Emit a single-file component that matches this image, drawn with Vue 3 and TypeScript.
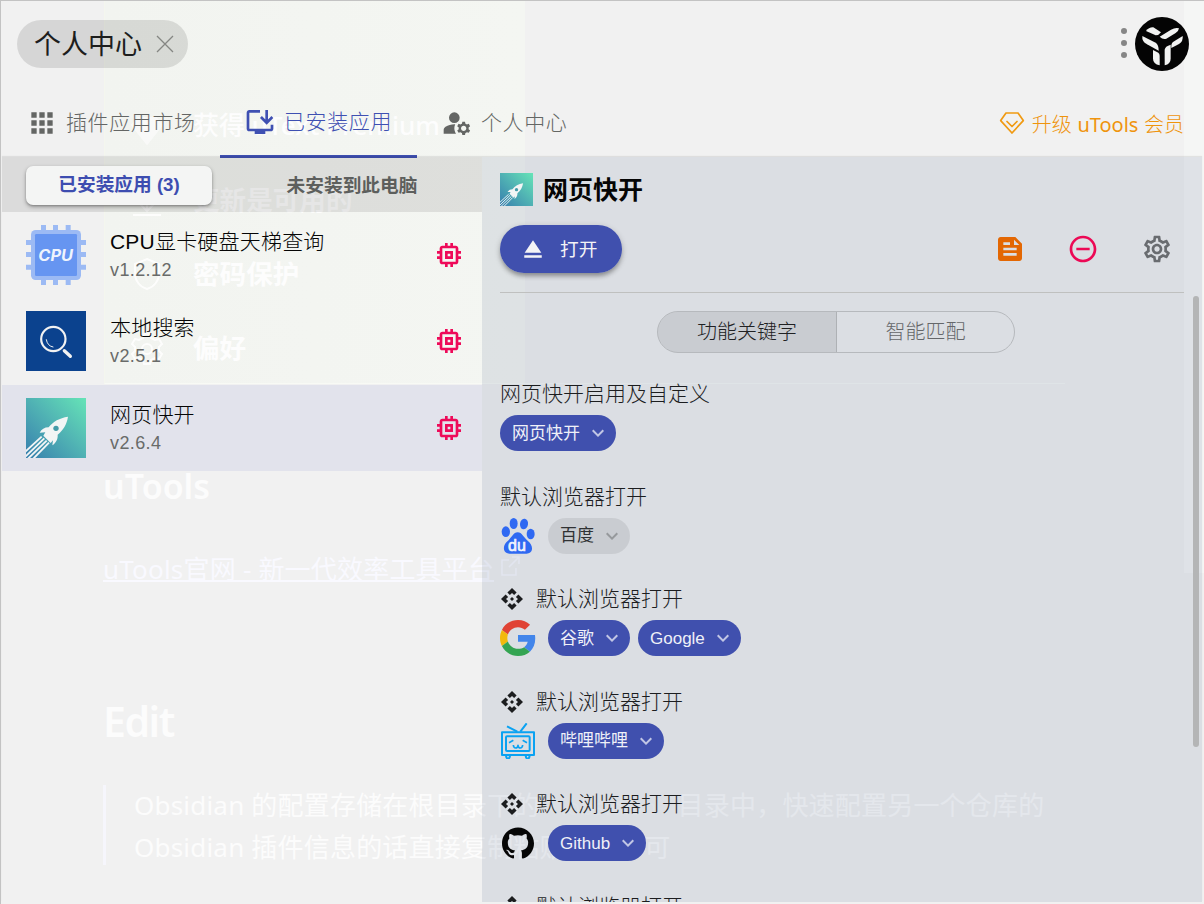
<script setup lang="ts">
interface PluginApp { id: string; name: string; version: string; active: boolean }
interface Keyword { label: string; enabled: boolean }
interface Feature { title: string; logo: string; api: boolean; keywords: Keyword[] }

const apps: PluginApp[] = [
  { id: 'cpu', name: 'CPU显卡硬盘天梯查询', version: 'v1.2.12', active: false },
  { id: 'search', name: '本地搜索', version: 'v2.5.1', active: false },
  { id: 'rocket', name: '网页快开', version: 'v2.6.4', active: true },
]

const features: Feature[] = [
  { title: '网页快开启用及自定义', logo: '', api: false, keywords: [{ label: '网页快开', enabled: true }] },
  { title: '默认浏览器打开', logo: 'baidu', api: false, keywords: [{ label: '百度', enabled: false }] },
  { title: '默认浏览器打开', logo: 'google', api: true, keywords: [{ label: '谷歌', enabled: true }, { label: 'Google', enabled: true }] },
  { title: '默认浏览器打开', logo: 'bilibili', api: true, keywords: [{ label: '哔哩哔哩', enabled: true }] },
  { title: '默认浏览器打开', logo: 'github', api: true, keywords: [{ label: 'Github', enabled: true }] },
  { title: '默认浏览器打开', logo: '', api: true, keywords: [] },
]

const icons = {
  apps: 'M4 8h4V4H4v4zm6 12h4v-4h-4v4zm-6 0h4v-4H4v4zm0-6h4v-4H4v4zm6 0h4v-4h-4v4zm6-10v4h4V4h-4zm-6 4h4V4h-4v4zm6 6h4v-4h-4v4zm0 6h4v-4h-4v4z',
  install: 'M20 17H4V5h8V3H4c-1.1 0-2 .9-2 2v12c0 1.1.9 2 2 2h4v2h8v-2h4c1.1 0 2-.9 2-2v-3h-2v3zM17 14l5-5-1.41-1.41L18 10.17V3h-2v7.17l-2.59-2.58L12 9l5 5z',
  account: 'M10 4a4 4 0 1 0 0 8 4 4 0 0 0 0-8zM10.67 13.02C10.45 13.01 10.23 13 10 13c-2.42 0-4.68.67-6.61 1.82-.88.52-1.39 1.5-1.39 2.53V20h9.26c-.79-1.13-1.26-2.51-1.26-4 0-1.07.25-2.07.67-2.98zM20.75 16c0-.22-.03-.42-.06-.63l1.14-1.01-1-1.73-1.45.49c-.32-.27-.68-.48-1.08-.63L18 11h-2l-.3 1.49c-.4.15-.76.36-1.08.63l-1.45-.49-1 1.73 1.14 1.01c-.03.21-.06.41-.06.63s.03.42.06.63l-1.14 1.01 1 1.73 1.45-.49c.32.27.68.48 1.08.63L16 21h2l.3-1.49c.4-.15.76-.36 1.08-.63l1.45.49 1-1.73-1.14-1.01c.03-.21.06-.41.06-.63zM17 18c-1.1 0-2-.9-2-2s.9-2 2-2 2 .9 2 2-.9 2-2 2z',
  memory: 'M15 9H9v6h6V9zm-2 4h-2v-2h2v2zm8-2V9h-2V7c0-1.1-.9-2-2-2h-2V3h-2v2h-2V3H9v2H7c-1.1 0-2 .9-2 2v2H3v2h2v2H3v2h2v2c0 1.1.9 2 2 2h2v2h2v-2h2v2h2v-2h2c1.1 0 2-.9 2-2v-2h2v-2h-2v-2h2zm-4 6H7V7h10v10z',
  eject: 'M5 17h14v2H5zm7-12L5.33 15h13.34z',
  feed: 'M16 3H5c-1.1 0-2 .9-2 2v14c0 1.1.9 2 2 2h14c1.1 0 2-.9 2-2V8l-5-5zM7 7h5v2H7V7zm10 10H7v-2h10v2zm0-4H7v-2h10v2zm-2-4V5l4 4h-4z',
  remove: 'M7 11v2h10v-2H7zm5-9C6.48 2 2 6.48 2 12s4.48 10 10 10 10-4.48 10-10S17.52 2 12 2zm0 18c-4.41 0-8-3.59-8-8s3.59-8 8-8 8 3.59 8 8-3.59 8-8 8z',
  settings: 'M19.43 12.98c.04-.32.07-.64.07-.98 0-.34-.03-.66-.07-.98l2.11-1.65c.19-.15.24-.42.12-.64l-2-3.46c-.09-.16-.26-.25-.44-.25-.06 0-.12.01-.17.03l-2.49 1c-.52-.4-1.08-.73-1.69-.98l-.38-2.65C14.46 2.18 14.25 2 14 2h-4c-.25 0-.46.18-.49.42l-.38 2.65c-.61.25-1.17.59-1.69.98l-2.49-1c-.06-.02-.12-.03-.18-.03-.17 0-.34.09-.43.25l-2 3.46c-.13.22-.07.49.12.64l2.11 1.65c-.04.32-.07.65-.07.98 0 .33.03.66.07.98l-2.11 1.65c-.19.15-.24.42-.12.64l2 3.46c.09.16.26.25.44.25.06 0 .12-.01.17-.03l2.49-1c.52.4 1.08.73 1.69.98l.38 2.65c.03.24.24.42.49.42h4c.25 0 .46-.18.49-.42l.38-2.65c.61-.25 1.17-.59 1.69-.98l2.49 1c.06.02.12.03.18.03.17 0 .34-.09.43-.25l2-3.46c.12-.22.07-.49-.12-.64l-2.11-1.65zm-1.98-1.71c.04.31.05.52.05.73 0 .21-.02.43-.05.73l-.14 1.13.89.7 1.08.84-.7 1.21-1.27-.51-1.04-.42-.9.68c-.43.32-.84.56-1.25.73l-1.06.43-.16 1.13-.2 1.35h-1.4l-.19-1.35-.16-1.13-1.06-.43c-.43-.18-.83-.41-1.23-.71l-.91-.7-1.06.43-1.27.51-.7-1.21 1.08-.84.89-.7-.14-1.13c-.03-.31-.05-.54-.05-.74s.02-.43.05-.73l.14-1.13-.89-.7-1.08-.84.7-1.21 1.27.51 1.04.42.9-.68c.43-.32.84-.56 1.25-.73l1.06-.43.16-1.13.2-1.35h1.39l.19 1.35.16 1.13 1.06.43c.43.18.83.41 1.23.71l.91.7 1.06-.43 1.27-.51.7 1.21-1.07.85-.89.7.14 1.13zM12 8c-2.21 0-4 1.79-4 4s1.79 4 4 4 4-1.79 4-4-1.79-4-4-4zm0 6c-1.1 0-2-.9-2-2s.9-2 2-2 2 .9 2 2-.9 2-2 2z',
  api: 'M14 12l-2 2-2-2 2-2 2 2zm-2-6l2.12 2.12 2.5-2.5L12 1 7.38 5.62l2.5 2.5L12 6zm-6 6l2.12-2.12-2.5-2.5L1 12l4.62 4.62 2.5-2.5L6 12zm12 0l-2.12 2.12 2.5 2.5L23 12l-4.62-4.62-2.5 2.5L18 12zm-6 6l-2.12-2.12-2.5 2.5L12 23l4.62-4.62-2.5-2.5L12 18z',
  chevron: 'M16.59 8.59L12 13.17 7.41 8.59 6 10l6 6 6-6z',
  github: 'M12 .297c-6.63 0-12 5.373-12 12 0 5.303 3.438 9.8 8.205 11.385.6.113.82-.258.82-.577 0-.285-.01-1.04-.015-2.04-3.338.724-4.042-1.61-4.042-1.61C4.422 18.07 3.633 17.7 3.633 17.7c-1.087-.744.084-.729.084-.729 1.205.084 1.838 1.236 1.838 1.236 1.07 1.835 2.809 1.305 3.495.998.108-.776.417-1.305.76-1.605-2.665-.3-5.466-1.332-5.466-5.93 0-1.31.465-2.38 1.235-3.22-.135-.303-.54-1.523.105-3.176 0 0 1.005-.322 3.3 1.23.96-.267 1.98-.399 3-.405 1.02.006 2.04.138 3 .405 2.28-1.552 3.285-1.23 3.285-1.23.645 1.653.24 2.873.12 3.176.765.84 1.23 1.91 1.23 3.22 0 4.61-2.805 5.625-5.475 5.92.42.36.81 1.096.81 2.22 0 1.606-.015 2.896-.015 3.286 0 .315.21.69.825.57C20.565 22.092 24 17.592 24 12.297c0-6.627-5.373-12-12-12',
}
const rocketBody = 'M126 56C100 60 82 70 68 88C55 88 47 94 41 104L58 103L52 113L74 135L81 127L79 142C90 134 96 124 95 110C112 96 122 80 126 56Z'
</script>

<template>
  <div class="window">
    <!-- content of the window behind, seen through the translucent surface -->
    <div class="behind">
      <div class="tint"></div>
      <div class="tint-right"></div>
      <div class="edge"></div>
      <svg class="behind-icons" viewBox="0 0 40 280" width="40" height="280" fill="none" stroke="#fff" stroke-width="2">
        <path d="M11 11h18l6 7-15 19L5 18z" fill="#fff" opacity=".7" />
        <path d="M20 82v22m-9-9 9 9 9-9M6 108h28" />
        <path d="M20 152l12 5v9c0 8-5 14-12 16-7-2-12-8-12-16v-9z" />
        <path d="M17 227h6l1 4 4 2 4-1 3 5-3 3v4l3 3-3 5-4-1-4 2-1 4h-6l-1-4-4-2-4 1-3-5 3-3v-4l-3-3 3-5 4 1 4-2z" />
        <circle cx="20" cy="242" r="5" />
      </svg>
      <p class="b-menu m1">获得 uText Premium</p>
      <p class="b-menu m2">更新是可用的</p>
      <p class="b-menu m3">密码保护</p>
      <p class="b-menu m4">偏好</p>
      <p class="b-h2">uTools</p>
      <p class="b-link"><span>uTools官网 - 新一代效率工具平台</span>
        <svg width="21" height="21" viewBox="0 0 21 21" fill="none" stroke="#f9f9ff" stroke-width="1.6"><path d="M9 4H2v15h14v-7M12 1h7v7M19 1 9 11" /></svg>
      </p>
      <p class="b-h1">Edit</p>
      <div class="b-quote">
        <p>Obsidian 的配置存储在根目录下的<span class="code">.obsidian</span>目录中，快速配置另一个仓库的</p>
        <p>Obsidian 插件信息的话直接复制粘贴过去即可</p>
      </div>
    </div>

    <header class="topbar">
      <div class="pill">
        <span>个人中心</span>
        <svg width="18" height="18" viewBox="0 0 18 18"><path d="M1 1l16 16M17 1L1 17" stroke="#858683" stroke-width="1.3" /></svg>
      </div>
      <div class="top-right">
        <div class="dots"><i></i><i></i><i></i></div>
        <svg class="avatar" viewBox="0 0 162 162" width="54" height="54">
          <circle cx="81" cy="81" r="81" fill="#040404" />
          <g fill="#f1f2f1">
            <path d="M33 42Q42 30 55 31L78 46Q72 55 62 55Z" />
            <path d="M74 59L108 38Q122 30 132 34Q131 43 122 48L94 65Q84 69 74 59Z" />
            <path d="M22 57L62 77Q71 83 71 101L36 82Q20 73 22 57Z" />
            <path d="M143 57L114 75Q108 80 109 93L132 81Q145 73 143 57Z" />
            <path d="M54 99L70 107Q74 110 74 117V145Q54 140 54 125Z" />
            <path d="M89 145V98Q90 88 107 83V125Q107 140 89 145Z" />
          </g>
        </svg>
      </div>
    </header>

    <nav class="tabs">
      <div class="tab"><svg class="ico" viewBox="0 0 24 24"><path :d="icons.apps" /></svg><span>插件应用市场</span></div>
      <div class="tab on"><svg class="ico" viewBox="0 0 24 24"><path :d="icons.install" /></svg><span>已安装应用</span></div>
      <div class="tab"><svg class="ico" viewBox="0 0 24 24"><path :d="icons.account" /></svg><span>个人中心</span></div>
      <div class="upgrade">
        <svg width="26" height="24" viewBox="0 0 26 24" fill="none" stroke="#f09a12" stroke-width="1.7" stroke-linejoin="round" stroke-linecap="round"><path d="M7 2h12l5.3 7.6L13 22 1.7 9.6z" /><path d="M8 10.5l5 5 5-5" /></svg>
        <span>升级 <b>uTools</b> 会员</span>
      </div>
    </nav>

    <main class="body">
      <aside class="side">
        <div class="switch">
          <div class="sw on">已安装应用 (3)</div>
          <div class="sw">未安装到此电脑</div>
        </div>
        <div v-for="app in apps" :key="app.id" class="row" :class="{ active: app.active }">
          <svg v-if="app.id === 'cpu'" class="logo" viewBox="0 0 180 180">
            <path fill="#9cbaf4" d="M45 0h15v180H45zM81 0h15v180H81zM119 0h15v180h-15zM0 45h180v15H0zM0 81h180v15H0zM0 119h180v15H0z" />
            <rect x="15" y="15" width="150" height="150" rx="14" fill="#9cbaf4" />
            <rect x="27" y="27" width="126" height="126" rx="4" fill="#6695f1" />
            <text x="89" y="109" text-anchor="middle" textLength="104" lengthAdjust="spacingAndGlyphs" class="cpu-text">CPU</text>
          </svg>
          <svg v-else-if="app.id === 'search'" class="logo" viewBox="0 0 180 180" fill="none" stroke-linecap="round">
            <rect width="180" height="180" fill="#0b428e" />
            <circle cx="82" cy="84" r="36.5" stroke="#f2f2f2" stroke-width="6.500" />
            <path d="M115 119l18 17" stroke="#f2f2f2" stroke-width="10" />
            <path d="M61 86q3 19 20 22" stroke="#f2f2f2" stroke-width="3" />
          </svg>
          <svg v-else class="logo" viewBox="0 0 180 180">
            <defs><linearGradient id="sea" x1="0" y1="1" x2="1" y2="0"><stop offset="0" stop-color="#377fae" /><stop offset=".55" stop-color="#52b6b4" /><stop offset="1" stop-color="#66e4b7" /></linearGradient></defs>
            <rect width="180" height="180" fill="url(#sea)" />
            <path :d="rocketBody" fill="#f3f5f5" />
            <circle cx="90" cy="91" r="8" fill="#459ba8" />
            <path d="M47 116L-4 163M55 121L-4 178M62 128L4 184M69 134L20 184" stroke="#f3f5f5" stroke-width="5.500" />
          </svg>
          <div class="meta"><div class="name">{{ app.name }}</div><div class="ver">{{ app.version }}</div></div>
          <svg class="ico mem" viewBox="0 0 24 24"><path :d="icons.memory" /></svg>
        </div>
      </aside>

      <section class="detail">
        <div class="title">
          <svg width="33" height="33" viewBox="0 0 180 180">
            <rect width="180" height="180" fill="url(#sea)" />
            <path :d="rocketBody" fill="#f3f5f5" />
            <circle cx="90" cy="91" r="9" fill="#459ba8" />
            <path d="M47 116L-4 163M55 121L-4 178M62 128L4 184M69 134L20 184" stroke="#f3f5f5" stroke-width="5" />
          </svg>
          <h1>网页快开</h1>
        </div>
        <div class="actions">
          <button class="open"><svg width="30" height="30" viewBox="0 0 24 24"><path :d="icons.eject" /></svg><span>打开</span></button>
          <div class="tools">
            <svg class="ico feed" viewBox="0 0 24 24"><path :d="icons.feed" /></svg>
            <svg class="ico remove" viewBox="0 0 24 24"><path :d="icons.remove" /></svg>
            <svg class="ico" viewBox="0 0 24 24"><path :d="icons.settings" /></svg>
          </div>
        </div>
        <div class="scroll">
          <div class="segment"><div class="seg on">功能关键字</div><div class="seg">智能匹配</div></div>
          <div v-for="(f, i) in features" :key="i" class="feature">
            <div class="f-title">
              <svg v-if="f.api" width="24" height="24" viewBox="0 0 24 24"><path :d="icons.api" /></svg>
              <span>{{ f.title }}</span>
            </div>
            <div class="chips">
              <svg v-if="f.logo === 'baidu'" class="brand" viewBox="0 0 108 108" fill="#2f69f2">
                <ellipse cx="17.500" cy="41" rx="12.500" ry="16" /><ellipse cx="41" cy="16.500" rx="12" ry="16.500" /><ellipse cx="72" cy="18" rx="12" ry="16" transform="rotate(10 72 18)" /><ellipse cx="92" cy="48" rx="12" ry="15.500" />
                <path d="M53 43C66 43 70 58 83 68C95 78 99 90 94 100C88 110 72 107 53 107C36 107 20 110 14 100C8 88 14 76 24 68C36 58 40 43 53 43Z" />
                <text x="51" y="98" text-anchor="middle" class="du-text">du</text>
              </svg>
              <svg v-else-if="f.logo === 'google'" class="brand" viewBox="0 0 48 48">
                <path fill="#e04335" d="M24 9.500c3.540 0 6.710 1.220 9.210 3.600l6.850-6.850C35.900 2.380 30.470 0 24 0 14.620 0 6.510 5.380 2.560 13.220l7.980 6.190C12.430 13.720 17.740 9.500 24 9.500z" />
                <path fill="#4285ea" d="M46.980 24.550c0-1.570-.15-3.090-.38-4.550H24v9.020h12.940c-.58 2.960-2.260 5.480-4.780 7.180l7.730 6c4.510-4.180 7.090-10.360 7.090-17.650z" />
                <path fill="#f2b90c" d="M10.530 28.590c-.48-1.450-.76-2.990-.76-4.590s.27-3.140.76-4.590l-7.980-6.190C.92 16.460 0 20.120 0 24c0 3.880.92 7.540 2.560 10.780l7.970-6.190z" />
                <path fill="#34a452" d="M24 48c6.480 0 11.930-2.130 15.890-5.810l-7.730-6c-2.150 1.450-4.920 2.300-8.160 2.300-6.260 0-11.570-4.220-13.470-9.910l-7.980 6.190C6.510 42.620 14.620 48 24 48z" />
              </svg>
              <svg v-else-if="f.logo === 'bilibili'" class="brand" viewBox="0 0 108 108" fill="none" stroke="#0aa2f2" stroke-width="6" stroke-linejoin="round">
                <rect x="6" y="28" width="96" height="68" /><rect x="18" y="40" width="71" height="44" rx="3" />
                <path d="M21 10l31 16M80 1L61 26M18 98q1 9 6 9t6-9M77 98q1 9 6 9t6-9" />
                <path d="M27 59l13-7M81 59l-13-7M40 66q1 9 7 9t7-8q1 8 7 8t7-9" stroke-width="5" />
              </svg>
              <svg v-else-if="f.logo === 'github'" class="brand gh" viewBox="0 0 24 24"><path :d="icons.github" /></svg>
              <div v-for="k in f.keywords" :key="k.label" class="chip" :class="{ off: !k.enabled }">
                <span>{{ k.label }}</span><svg width="24" height="24" viewBox="0 0 24 24"><path :d="icons.chevron" /></svg>
              </div>
            </div>
          </div>
        </div>
        <div class="thumb"></div>
      </section>
    </main>
  </div>
</template>

<style>
html, body { margin: 0; height: 904px; overflow: hidden; }
</style>

<style scoped>
* { box-sizing: border-box; }
p, h1 { margin: 0; }
svg { display: block; flex: none; }
.window { position: relative; width: 1204px; height: 904px; overflow: hidden; background: #f1f1f1; border-top: 1px solid #c3c3c3; border-left: 1px solid #c3c3c3; font-family: "Liberation Sans", "Noto Sans CJK SC", sans-serif; display: flex; flex-direction: column; padding: 0 2px 2px 1px; }
.ico { width: 32px; height: 32px; fill: currentColor; }

.behind { position: absolute; inset: 0; color: #fcfcfc; font-family: "Noto Sans", "Noto Sans CJK SC", sans-serif; white-space: nowrap; }
.behind > * { position: absolute; }
.tint { left: 103px; top: 0; width: 421px; height: 383px; background: linear-gradient(90deg, #f2f4f0, #f4f6f2); border-left: 1px solid #f4f6ee; border-bottom: 1px solid #f8faf5; }
.tint-right { left: 1183px; top: 0; width: 20px; height: 572px; background: #f5f6f5; }
.edge { left: 524px; top: 382px; width: 540px; height: 1px; background: #f6f8f6; }
.behind-icons { left: 126px; top: 106px; opacity: .85; }
.b-menu { left: 192px; font-size: 26.600px; line-height: 40px; font-weight: 700; color: #fdfdfd; }
.m1 { top: 104px; font-size: 26px; font-weight: 500; } .m2 { top: 179px; } .m3 { top: 253px; } .m4 { top: 327px; }
.b-h2 { left: 102px; top: 460px; font-size: 34px; line-height: 50px; font-weight: 600; }
.b-h1 { left: 102px; top: 690px; font-size: 41px; line-height: 60px; font-weight: 600; letter-spacing: -1.500px; }
.b-link { left: 102px; top: 549px; font-size: 26px; line-height: 38px; font-weight: 400; letter-spacing: .2px; color: #f9f9ff; display: flex; gap: 6px; align-items: center; }
.b-link span { height: 32px; line-height: 38px; border-bottom: 2px solid #f9f9ff; }
.b-quote { left: 102px; top: 784px; height: 80px; border-left: 3px solid #f6f6fc; padding-left: 28px; font-size: 26px; line-height: 41px; font-weight: 400; letter-spacing: .2px; }
.code { display: inline-block; width: 138px; text-align: center; opacity: .3; font-size: 22px; }

.topbar { position: relative; height: 87px; flex: none; padding: 16px 13px 0 15px; display: flex; justify-content: space-between; }
.pill { margin-top: 3px; width: 171px; height: 48px; border-radius: 24px; background: rgba(0, 0, 0, .11); display: flex; align-items: center; padding-left: 17px; gap: 14px; font-size: 27px; font-weight: 400; color: #1d1e1d; line-height: 48px; }
.pill span { padding-top: 2px; }
.top-right { display: flex; gap: 8px; }
.dots { display: flex; flex-direction: column; gap: 6.300px; padding-top: 10.500px; }
.dots i { width: 6px; height: 6px; border-radius: 50%; background: #868686; }

.tabs { position: relative; height: 69px; flex: none; display: flex; color: #646664; font-size: 21px; letter-spacing: .6px; font-weight: 300; }
.tab { display: flex; align-items: center; gap: 8px; padding: 0 24px 1px; height: 70px; }
.tab span { line-height: 30px; white-space: nowrap; }
.tab.on { color: #3f50b2; border-bottom: 3px solid #3f50b2; padding-top: 1px; padding-bottom: 0; width: 197px; }
.tab:first-child { width: 218px; }
.upgrade { margin-left: auto; margin-right: 18px; display: flex; align-items: center; gap: 7px; color: #ef940d; font-size: 20px; letter-spacing: 0; padding-top: 1px; white-space: nowrap; }
.upgrade b { font-family: "Noto Sans", sans-serif; font-weight: 400; }

.body { position: relative; flex: 1; min-height: 0; display: flex; box-shadow: 0 -1px 1px rgba(0, 0, 0, .08); }
.side { width: 480px; flex: none; }
.switch { height: 55px; background: rgba(0, 0, 0, .09); display: flex; align-items: center; padding: 2px 0 0 24px; font-size: 18.700px; font-weight: 700; color: #5d5f5d; }
.sw { flex: 1; padding-right: 0; line-height: 38px; text-align: center; }
.sw.on { flex: 0 0 186px; height: 39px; border-radius: 7px; background: #f4f5f4; color: #3d4db0; box-shadow: 0 2px 4px rgba(0, 0, 0, .3), 0 1px 2px rgba(0, 0, 0, .2); margin-right: 10px; }
.row { height: 86.300px; display: flex; align-items: flex-start; padding: 13px 17px 0 24px; }
.row.active { background: rgba(101, 111, 201, .1); }
.logo { width: 60px; height: 60px; }
.meta { flex: 1; padding: 1px 0 0 24px; color: #050505; }
.name { font-size: 21px; line-height: 31px; font-weight: 300; letter-spacing: .2px; }
.ver { font-size: 18px; line-height: 26px; color: #696b69; letter-spacing: .4px; }
.mem { color: #ee0a59; margin-top: 14px; }
.cpu-text { font: italic 700 47px "Inter", sans-serif; fill: #f0f4fd; }
.du-text { font: 400 48px "Liberation Sans", sans-serif; fill: #f0f4fd; stroke: #f0f4fd; stroke-width: 2px; }

.detail { position: relative; width: 720px; background: rgba(126, 146, 171, .19); padding: 16px 18px 0; display: flex; flex-direction: column; }
.title { display: flex; align-items: center; gap: 10px; height: 33px; }
.title h1 { font-size: 25px; line-height: 34px; font-weight: 700; color: #050505; padding-top: 1px; }
.actions { display: flex; justify-content: space-between; height: 87px; margin-top: 0; padding-top: 19px; border-bottom: 1px solid #bfc0bf; flex: none; }
.open { width: 122px; height: 48px; border: 0; border-radius: 24px; background: rgba(60, 76, 172, .98); color: #f3f3f6; font: 400 18.700px "Liberation Sans", "Noto Sans CJK SC", sans-serif; display: flex; align-items: center; padding: 0 0 0 18px; gap: 12px; box-shadow: 0 4px 4px -1px rgba(0, 0, 0, .25), 0 2px 6px rgba(0, 0, 0, .2); }
.open span { padding-bottom: 3px; }
.open svg { fill: #f3f3f6; }
.tools { display: flex; gap: 41.500px; padding: 8px 11.500px 0 0; color: #696c70; }
.feed { color: #e36703; }
.remove { color: #ec0955; }
.scroll { flex: 1; min-height: 0; overflow: hidden; padding-top: 18px; }
.segment { width: 358px; height: 42px; margin: 0 auto 26px 157px; border: 1px solid #b6b9bd; border-radius: 21px; overflow: hidden; display: flex; font-size: 20px; line-height: 41px; font-weight: 300; color: #65676a; text-align: center; }
.seg { flex: 1; }
.seg.on { flex: 0 0 179px; background: rgba(0, 0, 0, .08); border-right: 1px solid #aeb1b5; color: #202123; }
.feature { height: 102.500px; }
.f-title { height: 30px; display: flex; align-items: center; gap: 12px; font-size: 21px; line-height: 30px; font-weight: 300; color: #1c1d1f; fill: #1c1d1f; }
.chips { display: flex; margin-top: 6px; gap: 8px; height: 36px; }
.brand { width: 36px; height: 36px; margin-right: 4px; }
.gh { padding: 2px; fill: #060606; }
.chip { height: 36px; border-radius: 18px; background: rgba(60, 76, 172, .98); color: #eff0f8; fill: rgba(255, 255, 255, .68); display: flex; align-items: center; gap: 6px; padding: 0 6px 0 12px; font-size: 17px; line-height: 37px; white-space: nowrap; }
.chip.off { background: rgba(0, 0, 0, .08); color: #303234; fill: #96999c; }
.thumb { position: absolute; right: 3px; top: 139px; width: 6px; height: 451px; border-radius: 3px; background: #b4b5b6; }
</style>
